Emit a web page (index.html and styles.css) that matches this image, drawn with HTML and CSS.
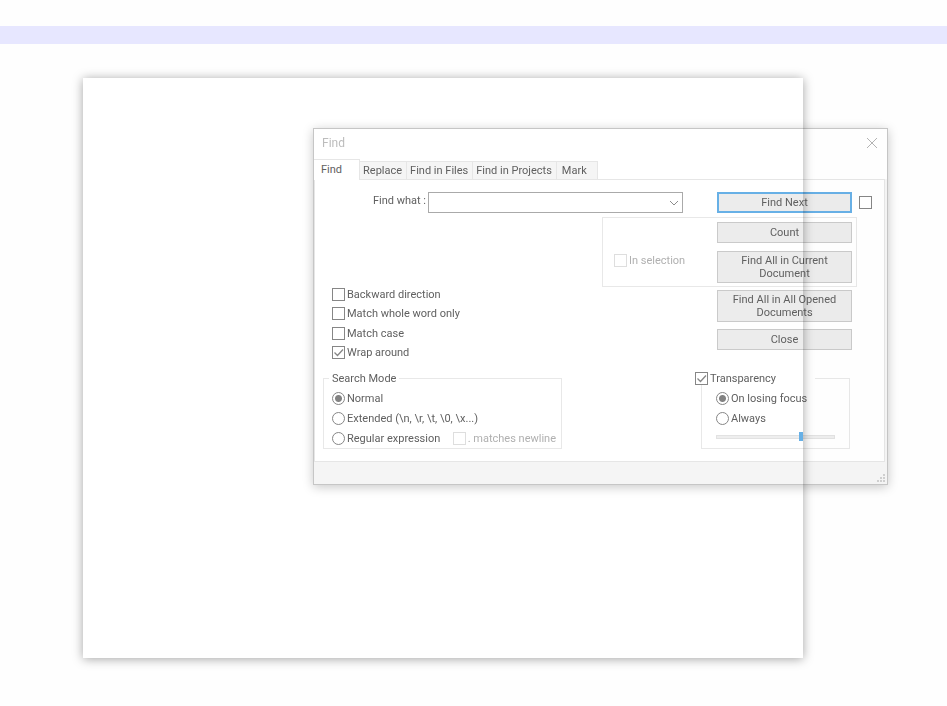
FILE: index.html
```
<!DOCTYPE html>
<html lang="en">

<head>
  <meta charset="UTF-8">
  <meta name="viewport" content="width=device-width, initial-scale=1.0">
  <title>Find</title>
  <link rel="stylesheet" href="styles.css">
</head>

<body>
  <div class="desktop">
    <div class="line"></div>
    <div class="paper"></div>

    <form class="dialog" onsubmit="return false">
      <div class="titlebar">
        <span>Find</span>
        <button type="button" class="close" aria-label="Close window">
          <svg width="12" height="12" viewBox="0 0 12 12"><path d="M1 1L11 11M11 1L1 11" stroke="#b4b4b4" fill="none"/></svg>
        </button>
      </div>

      <div class="tabs">
        <button type="button" class="tab active">Find</button>
        <button type="button" class="tab">Replace</button>
        <button type="button" class="tab">Find in Files</button>
        <button type="button" class="tab">Find in Projects</button>
        <button type="button" class="tab">Mark</button>
      </div>

      <div class="body">
        <div class="panel">
          <div class="search">
            <label for="what">Find what :</label>
            <div class="combo">
              <select id="what"><option></option></select>
              <svg class="arrow" width="10" height="6" viewBox="0 0 10 6"><path d="M1 1L5 5L9 1" stroke="#8c8c8c" fill="none"/></svg>
            </div>
            <button class="btn default">Find Next</button>
            <input type="checkbox" aria-label="Two find buttons">
          </div>

          <div class="selection">
            <label class="check off"><input type="checkbox" disabled>In selection</label>
            <div class="buttons">
              <button type="button" class="btn">Count</button>
              <button type="button" class="btn tall">Find All in Current Document</button>
            </div>
          </div>

          <div class="middle">
            <div class="options">
              <label class="check"><input type="checkbox">Backward direction</label>
              <label class="check"><input type="checkbox">Match whole word only</label>
              <label class="check"><input type="checkbox">Match case</label>
              <label class="check"><input type="checkbox" checked>Wrap around</label>
            </div>
            <div class="buttons">
              <button type="button" class="btn tall">Find All in All Opened Documents</button>
              <button type="button" class="btn">Close</button>
            </div>
          </div>

          <div class="groups">
            <fieldset class="mode">
              <legend>Search Mode</legend>
              <label class="check"><input type="radio" name="mode" checked>Normal</label>
              <label class="check"><input type="radio" name="mode">Extended (\n, \r, \t, \0, \x...)</label>
              <div class="regex">
                <label class="check"><input type="radio" name="mode">Regular expression</label>
                <label class="check off"><input type="checkbox" disabled>. matches newline</label>
              </div>
            </fieldset>
            <fieldset class="transparency">
              <legend><label class="check"><input type="checkbox" checked>Transparency</label></legend>
              <label class="check"><input type="radio" name="trans" checked>On losing focus</label>
              <label class="check"><input type="radio" name="trans">Always</label>
              <input type="range" min="0" max="100" value="73" aria-label="Transparency level">
            </fieldset>
          </div>
        </div>

        <div class="status">
          <svg width="8" height="8" viewBox="0 0 8 8" fill="#d0d0d0"><path d="M6 0h2v2h-2zM3 3h2v2h-2zM6 3h2v2h-2zM0 6h2v2h-2zM3 6h2v2h-2zM6 6h2v2h-2z"/></svg>
        </div>
      </div>
    </form>
  </div>
</body>

</html>
```
FILE: styles.css
```
* {
  box-sizing: border-box;
}

body {
  margin: 0;
  background-color: #fefefe;
  color: #606060;
  font-family: Roboto, sans-serif;
  font-size: 11px;
  line-height: 13px;
}

button,
select,
input {
  margin: 0;
  font: inherit;
  color: inherit;
}

.desktop {
  position: relative;
  display: flex;
  flex-direction: column;
  min-height: 100vh;
  padding-top: 26px;
}

.line {
  height: 18px;
  background-color: #e7e7ff;
}

.paper {
  flex: 1;
  margin: 34px 144px 48px 83px;
  background-color: white;
  box-shadow: 0 1px 10px rgba(0, 0, 0, 0.36);
}

/* the window floats over the paper and lets its shadow show through */
.dialog {
  position: absolute;
  top: 128px;
  left: 313px;
  right: 59px;
  border: 1px solid #c6c6c6;
  background-color: white;
  box-shadow: 0 2px 10px rgba(0, 0, 0, 0.22);
  mix-blend-mode: multiply;
}

.titlebar {
  display: flex;
  justify-content: space-between;
  align-items: center;
  height: 30px;
  padding: 0 9px 2px 8px;
  color: #bcbcbc;
  font-size: 12px;
}

.close {
  display: flex;
  padding: 0;
  border: none;
  background: none;
}

.tabs {
  display: flex;
  align-items: flex-end;
  height: 20px;
}

.tab {
  height: 18px;
  padding: 0 4px 0 3px;
  border: 1px solid #e6e6e6;
  border-width: 1px 1px 0 0;
  background-color: #f5f5f5;
}

.tab.active {
  height: 21px;
  margin-bottom: -1px;
  padding: 0 17px 2px 7px;
  background-color: white;
  z-index: 1;
}

.tab:last-child {
  padding: 0 10px 0 5px;
}

.body {
  background-color: #f5f5f5;
}

.panel {
  margin-right: 2px;
  padding: 12px 12px 12px 8px;
  border: 1px solid #e6e6e6;
  background-color: white;
}

.search {
  display: flex;
  justify-content: flex-end;
  align-items: center;
}

.search label {
  margin: 0 2px 4px 0;
}

.combo {
  position: relative;
  width: 255px;
  margin-right: 34px;
}

.combo select {
  display: block;
  width: 100%;
  height: 21px;
  border: 1px solid #aaa;
  border-radius: 0;
  background-color: white;
  appearance: none;
}

.arrow {
  position: absolute;
  top: 8px;
  right: 4px;
}

.btn {
  width: 135px;
  height: 21px;
  padding: 0 12px;
  border: 1px solid #cacaca;
  background-color: #ececec;
}

.btn.default {
  margin-right: 7px;
  border: 2px solid #67b0e6;
}

.btn.tall {
  height: 32px;
}

.buttons {
  display: flex;
  flex-direction: column;
  gap: 8px;
}

.selection {
  display: flex;
  justify-content: space-between;
  align-items: center;
  width: 255px;
  margin: 4px 15px 1px auto;
  padding: 4px 4px 3px 11px;
  border: 1px solid #e8e8e8;
}

.selection .check {
  margin-top: 16px;
}

.middle {
  display: flex;
  justify-content: space-between;
  padding: 0 20px 0 9px;
}

.middle .buttons {
  gap: 7px;
  padding-top: 2px;
}

.options {
  display: flex;
  flex-direction: column;
  justify-content: space-between;
  height: 71px;
}

.check {
  display: flex;
  align-items: center;
  gap: 2px;
}

.off {
  color: #b0b0b0;
}

input[type=checkbox],
input[type=radio] {
  flex: none;
  width: 13px;
  height: 13px;
  border: 1px solid #868686;
  background: white center no-repeat;
  appearance: none;
}

input[type=checkbox]:checked {
  background-image: url("data:image/svg+xml,%3Csvg xmlns='http://www.w3.org/2000/svg' width='11' height='11'%3E%3Cpath d='M1.5 5.5L4.5 8.5L10 2.5' fill='none' stroke='%23868686' stroke-width='1.3'/%3E%3C/svg%3E");
}

input[type=checkbox]:disabled {
  border-color: #dedede;
}

input[type=radio] {
  border-radius: 50%;
}

input[type=radio]:checked {
  background-image: radial-gradient(circle, #828282 3px, transparent 4px);
}

.groups {
  display: flex;
  justify-content: space-between;
  padding: 13px 22px 0 0;
}

fieldset {
  display: flex;
  flex-direction: column;
  gap: 7px;
  min-width: 0;
  height: 77px;
  margin: 0;
  padding: 7px 5px 0 8px;
  border: 1px solid #e8e8e8;
}

.mode {
  width: 239px;
}

.mode legend {
  margin-left: -3px;
  padding: 0 3px;
}

.regex {
  display: flex;
  justify-content: space-between;
}

.transparency {
  width: 149px;
  padding: 7px 14px 0;
}

.transparency legend {
  width: 120px;
  margin-left: -21px;
  padding: 0;
  background-color: white;
}

input[type=range] {
  width: 100%;
  height: 9px;
  background: none;
  appearance: none;
}

input[type=range]::-webkit-slider-runnable-track {
  height: 4px;
  border: 1px solid #e2e2e2;
  background-color: #eee;
}

input[type=range]::-webkit-slider-thumb {
  width: 4px;
  height: 9px;
  margin-top: -4px;
  background-color: #67b0e6;
  appearance: none;
}

.status {
  display: flex;
  justify-content: flex-end;
  align-items: flex-end;
  height: 22px;
  padding: 2px;
}
```
